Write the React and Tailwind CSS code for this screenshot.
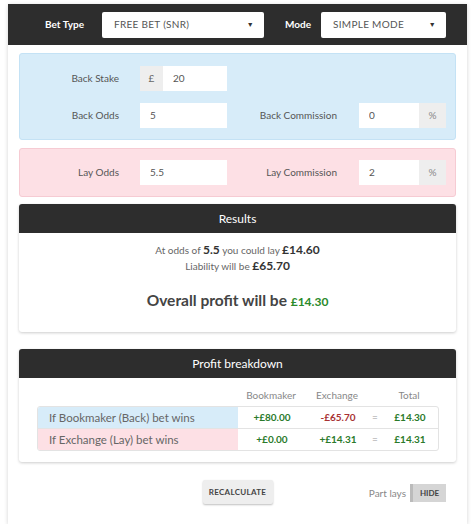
import React from "react";

const Field = ({ value, prefix, suffix }) => (
  <div className="flex h-[25px] w-[87px]">
    {prefix && (
      <span className="flex w-[23px] items-center justify-center bg-[#eeeeee] text-[10px] text-[#666]">
        {prefix}
      </span>
    )}
    <input
      readOnly
      value={value}
      className="min-w-0 flex-1 bg-white pl-[10px] text-[10px] text-[#555] outline-none"
    />
    {suffix && (
      <span className="flex w-[27px] items-center justify-center bg-[#eeeeee] text-[10px] text-[#888]">
        {suffix}
      </span>
    )}
  </div>
);

const Select = ({ value, width }) => (
  <div
    className={`flex h-[26px] items-center justify-between rounded-[2px] bg-white pl-[12px] pr-[10px] text-[10px] tracking-[0.3px] text-[#555] ${width}`}
  >
    <span>{value}</span>
    <span className="text-[7px] text-[#333]">▼</span>
  </div>
);

const Row = ({ label, field, label2, field2 }) => (
  <div className="flex items-center">
    <div className="w-[99px] text-right text-[10px] text-[#555]">{label}</div>
    <div className="ml-[21px]">{field}</div>
    {label2 && (
      <>
        <div className="w-[110px] text-right text-[10px] text-[#555]">{label2}</div>
        <div className="ml-[22px]">{field2}</div>
      </>
    )}
  </div>
);

const PanelHead = ({ title }) => (
  <div className="flex h-[29px] items-center justify-center rounded-t-[3px] bg-[#2d2d2d] text-[12px] text-white">
    {title}
  </div>
);

export default function App() {
  return (
    <div className="bg-white px-[8px] pt-[4px]" style={{ fontFamily: "Lato, 'Open Sans', sans-serif" }}>
      <div className="w-[459px] bg-white pb-[20px] shadow-[0_1px_4px_rgba(0,0,0,0.18)]">
        {/* top bar */}
        <div className="flex h-[41px] items-center bg-[#2d2d2d]">
          <span className="ml-[37px] w-[57px] text-[10px] font-bold text-white">Bet Type</span>
          <Select value="FREE BET (SNR)" width="w-[162px]" />
          <span className="ml-[21px] w-[36px] text-[10px] font-bold text-white">Mode</span>
          <Select value="SIMPLE MODE" width="w-[125px]" />
        </div>

        <div className="px-[11px] pt-[8px]">
          {/* back panel */}
          <div className="flex flex-col gap-[12px] rounded-[3px] border border-[#c4e2f5] bg-[#d7ecf9] pb-[11px] pt-[12px]">
            <Row label="Back Stake" field={<Field prefix="£" value="20" />} />
            <Row
              label="Back Odds"
              field={<Field value="5" />}
              label2="Back Commission"
              field2={<Field value="0" suffix="%" />}
            />
          </div>

          {/* lay panel */}
          <div className="mt-[8px] rounded-[3px] border border-[#f6cbd3] bg-[#fde0e5] py-[11px]">
            <Row
              label="Lay Odds"
              field={<Field value="5.5" />}
              label2="Lay Commission"
              field2={<Field value="2" suffix="%" />}
            />
          </div>

          {/* results */}
          <div className="mt-[7px] rounded-[3px] bg-white shadow-[0_1px_3px_rgba(0,0,0,0.2)]">
            <PanelHead title="Results" />
            <div className="flex h-[99px] flex-col items-center pt-[9px]">
              <div className="text-[10px] leading-[16px] text-[#666]">
                At odds of <b className="text-[12px] text-[#333]">5.5</b> you could lay{" "}
                <b className="text-[12px] text-[#333]">£14.60</b>
              </div>
              <div className="text-[10px] leading-[16px] text-[#666]">
                Liability will be <b className="text-[12px] text-[#333]">£65.70</b>
              </div>
              <div className="mt-[15px] text-[15.5px] font-bold text-[#444]">
                Overall profit will be <span className="text-[12px] text-[#2a8a2a]">£14.30</span>
              </div>
            </div>
          </div>

          {/* breakdown */}
          <div className="mt-[17px] rounded-[3px] bg-white shadow-[0_1px_3px_rgba(0,0,0,0.2)]">
            <PanelHead title="Profit breakdown" />
            <div className="px-[18px] pb-[11px] pt-[10px]">
              <div className="grid grid-cols-[200px_68px_64px_10px_60px] text-[10px]">
                <div />
                <div className="pb-[3px] text-center text-[#888]">Bookmaker</div>
                <div className="pb-[3px] text-center text-[#888]">Exchange</div>
                <div />
                <div className="pb-[3px] text-center text-[#888]">Total</div>
              </div>
              <div className="w-[402px] overflow-hidden rounded-[3px] border border-[#e3e3e3]">
                <div className="grid h-[22px] grid-cols-[200px_68px_64px_10px_60px] items-center border-b border-[#e3e3e3] text-[10px]">
                  <div className="flex h-full items-center bg-[#d7ecf9] pl-[11px] text-[11.5px] text-[#666]">If Bookmaker (Back) bet wins</div>
                  <div className="text-center font-bold text-[#2a7a2a]">+£80.00</div>
                  <div className="text-center font-bold text-[#a83232]">-£65.70</div>
                  <div className="text-center text-[#999]">=</div>
                  <div className="text-center font-bold text-[#2a7a2a]">£14.30</div>
                </div>
                <div className="grid h-[21px] grid-cols-[200px_68px_64px_10px_60px] items-center text-[10px]">
                  <div className="flex h-full items-center bg-[#fde0e5] pl-[11px] text-[11.5px] text-[#666]">If Exchange (Lay) bet wins</div>
                  <div className="text-center font-bold text-[#2a7a2a]">+£0.00</div>
                  <div className="text-center font-bold text-[#2a7a2a]">+£14.31</div>
                  <div className="text-center text-[#999]">=</div>
                  <div className="text-center font-bold text-[#2a7a2a]">£14.31</div>
                </div>
              </div>
            </div>
          </div>

          {/* actions */}
          <div className="relative mt-[18px] flex h-[24px] items-center justify-center">
            <button className="h-[24px] w-[70px] rounded-[2px] bg-[#eeeeee] text-[8px] font-bold tracking-[0.3px] text-[#444] shadow-[0_1px_2px_rgba(0,0,0,0.25)]">
              RECALCULATE
            </button>
            <div className="absolute right-[10px] top-[4px] flex items-center">
              <span className="mr-[4px] text-[10px] text-[#888]">Part lays</span>
              <span className="flex h-[18px] w-[36px] items-center justify-center border-l-[3px] border-[#bbb] bg-[#d5d5d5] text-[8px] font-bold text-[#444]">
                HIDE
              </span>
            </div>
          </div>
        </div>
      </div>
    </div>
  );
}
